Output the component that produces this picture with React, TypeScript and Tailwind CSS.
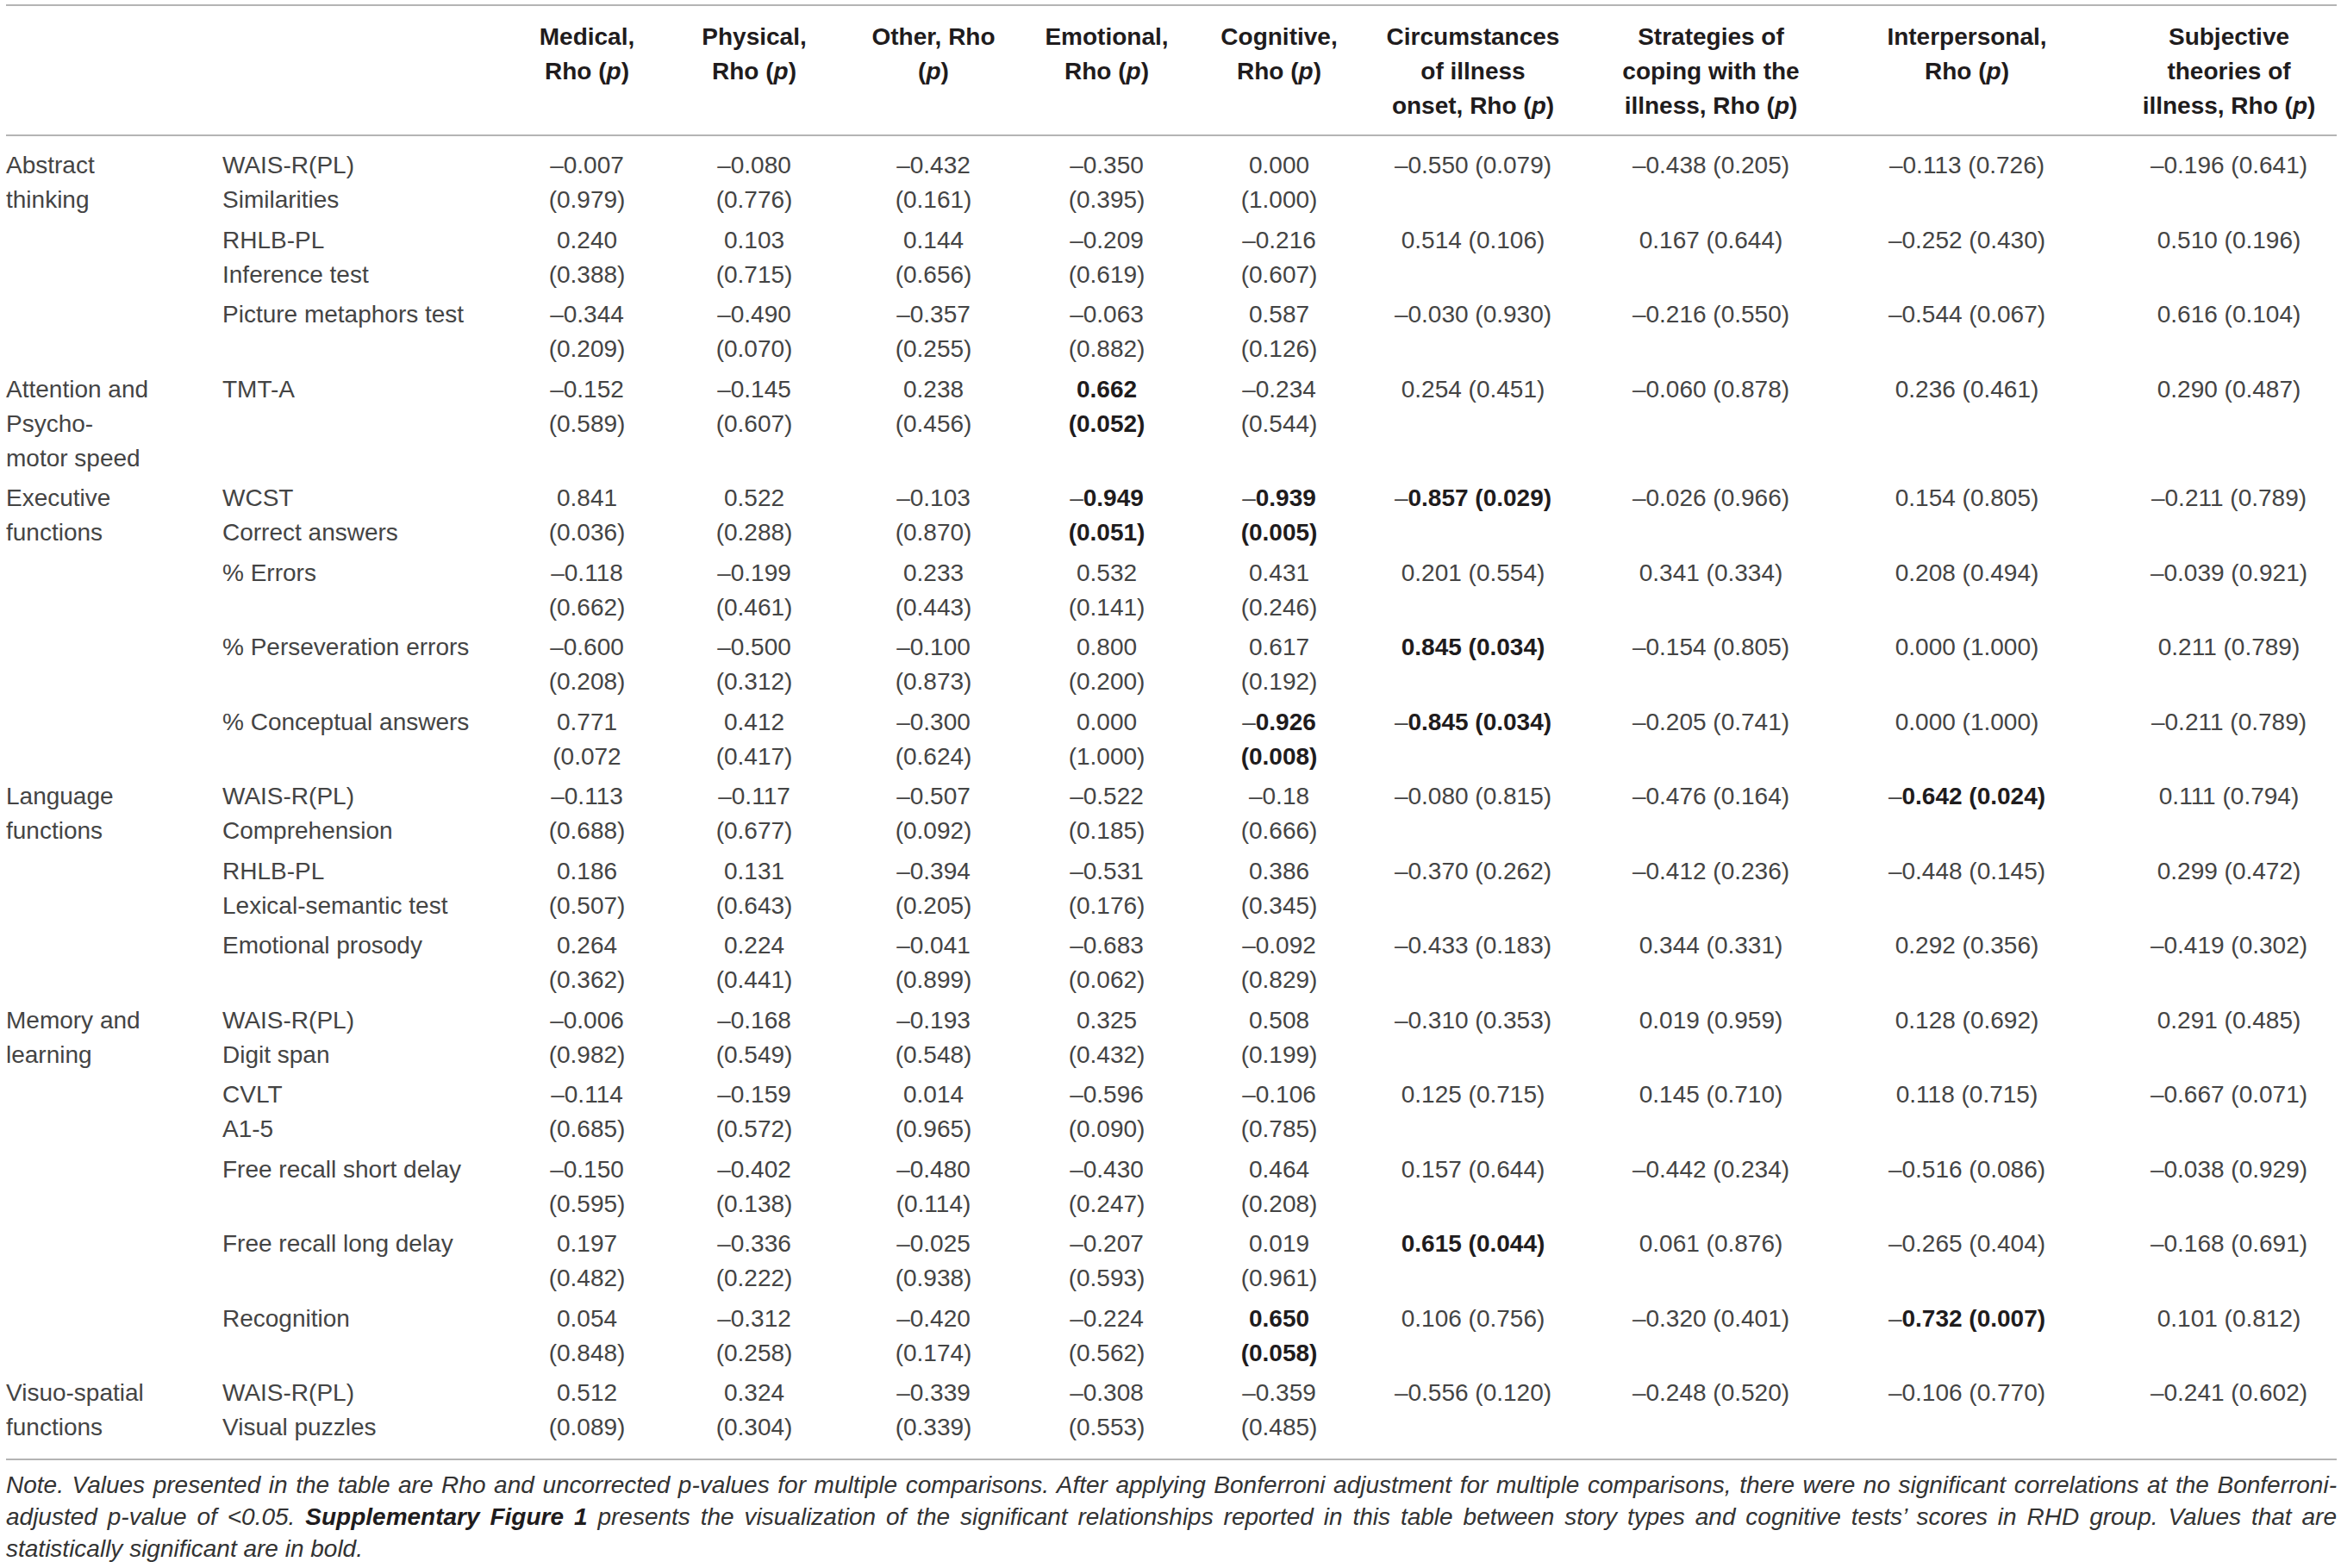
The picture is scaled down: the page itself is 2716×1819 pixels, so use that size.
const widths = [
  "w-[251px]",
  "w-[326px]",
  "w-[194px]",
  "w-[201px]",
  "w-[205px]",
  "w-[200px]",
  "w-[213px]",
  "w-[250px]",
  "w-[287px]",
  "w-[300px]",
  "w-[277px]",
];

// small nudges so each numeric column sits where the print puts it
const pads = ["", "pr-[7px]", "pl-[3px]", "", "pr-[13px]", "pr-[26px]", "pr-[11px]", "pr-[4px]", "pl-[27px]"];

type Row = { cat?: string[]; test: string[]; v: string[] };

// "*" marks a bold (significant) value
const rows: Row[] = [
  {
    cat: ["Abstract", "thinking"],
    test: ["WAIS-R(PL)", "Similarities"],
    v: ["–0.007 (0.979)", "–0.080 (0.776)", "–0.432 (0.161)", "–0.350 (0.395)", "0.000 (1.000)", "–0.550 (0.079)", "–0.438 (0.205)", "–0.113 (0.726)", "–0.196 (0.641)"],
  },
  {
    test: ["RHLB-PL", "Inference test"],
    v: ["0.240 (0.388)", "0.103 (0.715)", "0.144 (0.656)", "–0.209 (0.619)", "–0.216 (0.607)", "0.514 (0.106)", "0.167 (0.644)", "–0.252 (0.430)", "0.510 (0.196)"],
  },
  {
    test: ["Picture metaphors test"],
    v: ["–0.344 (0.209)", "–0.490 (0.070)", "–0.357 (0.255)", "–0.063 (0.882)", "0.587 (0.126)", "–0.030 (0.930)", "–0.216 (0.550)", "–0.544 (0.067)", "0.616 (0.104)"],
  },
  {
    cat: ["Attention and", "Psycho-", "motor speed"],
    test: ["TMT-A"],
    v: ["–0.152 (0.589)", "–0.145 (0.607)", "0.238 (0.456)", "*0.662 (0.052)", "–0.234 (0.544)", "0.254 (0.451)", "–0.060 (0.878)", "0.236 (0.461)", "0.290 (0.487)"],
  },
  {
    cat: ["Executive", "functions"],
    test: ["WCST", "Correct answers"],
    v: ["0.841 (0.036)", "0.522 (0.288)", "–0.103 (0.870)", "*–0.949 (0.051)", "*–0.939 (0.005)", "*–0.857 (0.029)", "–0.026 (0.966)", "0.154 (0.805)", "–0.211 (0.789)"],
  },
  {
    test: ["% Errors"],
    v: ["–0.118 (0.662)", "–0.199 (0.461)", "0.233 (0.443)", "0.532 (0.141)", "0.431 (0.246)", "0.201 (0.554)", "0.341 (0.334)", "0.208 (0.494)", "–0.039 (0.921)"],
  },
  {
    test: ["% Perseveration errors"],
    v: ["–0.600 (0.208)", "–0.500 (0.312)", "–0.100 (0.873)", "0.800 (0.200)", "0.617 (0.192)", "*0.845 (0.034)", "–0.154 (0.805)", "0.000 (1.000)", "0.211 (0.789)"],
  },
  {
    test: ["% Conceptual answers"],
    v: ["0.771 (0.072", "0.412 (0.417)", "–0.300 (0.624)", "0.000 (1.000)", "*–0.926 (0.008)", "*–0.845 (0.034)", "–0.205 (0.741)", "0.000 (1.000)", "–0.211 (0.789)"],
  },
  {
    cat: ["Language", "functions"],
    test: ["WAIS-R(PL)", "Comprehension"],
    v: ["–0.113 (0.688)", "–0.117 (0.677)", "–0.507 (0.092)", "–0.522 (0.185)", "–0.18 (0.666)", "–0.080 (0.815)", "–0.476 (0.164)", "*–0.642 (0.024)", "0.111 (0.794)"],
  },
  {
    test: ["RHLB-PL", "Lexical-semantic test"],
    v: ["0.186 (0.507)", "0.131 (0.643)", "–0.394 (0.205)", "–0.531 (0.176)", "0.386 (0.345)", "–0.370 (0.262)", "–0.412 (0.236)", "–0.448 (0.145)", "0.299 (0.472)"],
  },
  {
    test: ["Emotional prosody"],
    v: ["0.264 (0.362)", "0.224 (0.441)", "–0.041 (0.899)", "–0.683 (0.062)", "–0.092 (0.829)", "–0.433 (0.183)", "0.344 (0.331)", "0.292 (0.356)", "–0.419 (0.302)"],
  },
  {
    cat: ["Memory and", "learning"],
    test: ["WAIS-R(PL)", "Digit span"],
    v: ["–0.006 (0.982)", "–0.168 (0.549)", "–0.193 (0.548)", "0.325 (0.432)", "0.508 (0.199)", "–0.310 (0.353)", "0.019 (0.959)", "0.128 (0.692)", "0.291 (0.485)"],
  },
  {
    test: ["CVLT", "A1-5"],
    v: ["–0.114 (0.685)", "–0.159 (0.572)", "0.014 (0.965)", "–0.596 (0.090)", "–0.106 (0.785)", "0.125 (0.715)", "0.145 (0.710)", "0.118 (0.715)", "–0.667 (0.071)"],
  },
  {
    test: ["Free recall short delay"],
    v: ["–0.150 (0.595)", "–0.402 (0.138)", "–0.480 (0.114)", "–0.430 (0.247)", "0.464 (0.208)", "0.157 (0.644)", "–0.442 (0.234)", "–0.516 (0.086)", "–0.038 (0.929)"],
  },
  {
    test: ["Free recall long delay"],
    v: ["0.197 (0.482)", "–0.336 (0.222)", "–0.025 (0.938)", "–0.207 (0.593)", "0.019 (0.961)", "*0.615 (0.044)", "0.061 (0.876)", "–0.265 (0.404)", "–0.168 (0.691)"],
  },
  {
    test: ["Recognition"],
    v: ["0.054 (0.848)", "–0.312 (0.258)", "–0.420 (0.174)", "–0.224 (0.562)", "*0.650 (0.058)", "0.106 (0.756)", "–0.320 (0.401)", "*–0.732 (0.007)", "0.101 (0.812)"],
  },
  {
    cat: ["Visuo-spatial", "functions"],
    test: ["WAIS-R(PL)", "Visual puzzles"],
    v: ["0.512 (0.089)", "0.324 (0.304)", "–0.339 (0.339)", "–0.308 (0.553)", "–0.359 (0.485)", "–0.556 (0.120)", "–0.248 (0.520)", "–0.106 (0.770)", "–0.241 (0.602)"],
  },
];

const P = () => (
  <>
    (<i>p</i>)
  </>
);

const headers: React.ReactNode[][] = [
  ["Medical,", <>Rho <P /></>],
  ["Physical,", <>Rho <P /></>],
  ["Other, Rho", <P />],
  ["Emotional,", <>Rho <P /></>],
  ["Cognitive,", <>Rho <P /></>],
  ["Circumstances", "of illness", <>onset, Rho <P /></>],
  ["Strategies of", "coping with the", <>illness, Rho <P /></>],
  ["Interpersonal,", <>Rho <P /></>],
  ["Subjective", "theories of", <>illness, Rho <P /></>],
];

function Value({ s, split }: { s: string; split: boolean }) {
  const bold = s.startsWith("*");
  const raw = bold ? s.slice(1) : s;
  const neg = raw.startsWith("–");
  const [a, b] = (neg ? raw.slice(1) : raw).split(" ");
  const cls = bold ? "font-bold text-[#1f1c1d]" : "";

  if (split) {
    return (
      <>
        <div>
          {neg && "–"}
          <span className={cls}>{a}</span>
        </div>
        <div className={cls}>{b}</div>
      </>
    );
  }
  return (
    <div>
      {neg && "–"}
      <span className={cls}>
        {a} {b}
      </span>
    </div>
  );
}

export default function App() {
  return (
    <div className="min-h-screen bg-white pt-[5px] pl-[7px] font-['Liberation_Sans',Arial,sans-serif] text-[#444444]">
      <table className="table-fixed border-separate border-spacing-0 w-[2704px] text-[28px] leading-[40px]">
        <colgroup>
          {widths.map((w, i) => (
            <col key={i} className={w} />
          ))}
        </colgroup>
        <thead>
          <tr>
            <th className="border-y-2 border-[#b4b4b4]" />
            <th className="border-y-2 border-[#b4b4b4]" />
            {headers.map((lines, i) => (
              <th
                key={i}
                className={`border-y-2 border-[#b4b4b4] pt-[16px] pb-[13px] align-top text-center font-bold text-[#1f1c1d] whitespace-nowrap ${pads[i]}`}
              >
                {lines.map((l, j) => (
                  <div key={j}>{l}</div>
                ))}
              </th>
            ))}
          </tr>
        </thead>
        <tbody>
          {rows.map((r, ri) => {
            const first = ri === 0;
            const last = ri === rows.length - 1;
            const py = `${first ? "pt-[14px]" : "pt-[3.25px]"} ${last ? "pb-[16px] border-b-2 border-[#b4b4b4]" : "pb-[3.25px]"}`;
            return (
              <tr key={ri}>
                <td className={`align-top whitespace-nowrap ${py}`}>
                  {r.cat?.map((c) => <div key={c}>{c}</div>)}
                </td>
                <td className={`align-top whitespace-nowrap ${py}`}>
                  {r.test.map((t) => (
                    <div key={t}>{t}</div>
                  ))}
                </td>
                {r.v.map((s, ci) => (
                  <td key={ci} className={`align-top text-center whitespace-nowrap ${py} ${pads[ci]}`}>
                    <Value s={s} split={ci < 5} />
                  </td>
                ))}
              </tr>
            );
          })}
        </tbody>
      </table>

      <div className="mt-[10px] w-[2704px] text-[28px] leading-[37px] italic text-[#333333]">
        <div className="text-justify [text-align-last:justify]">
          Note. Values presented in the table are Rho and uncorrected p-values for multiple comparisons. After applying
          Bonferroni adjustment for multiple comparisons, there were no significant correlations at the Bonferroni-
        </div>
        <div className="text-justify [text-align-last:justify]">
          adjusted p-value of &lt;0.05. <b className="text-[#1f1c1d]">Supplementary Figure 1</b> presents the visualization
          of the significant relationships reported in this table between story types and cognitive tests’ scores in RHD
          group. Values that are
        </div>
        <div>statistically significant are in bold.</div>
      </div>
    </div>
  );
}
